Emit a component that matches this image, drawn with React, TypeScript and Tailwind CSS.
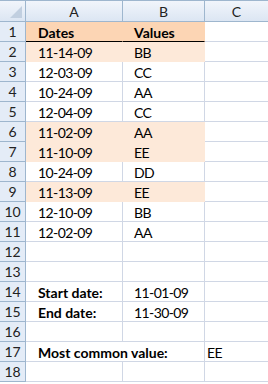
import React from 'react';

type Row = {
    a?: string;
    b?: string;
    c?: string;
    bold?: boolean;
    fill?: 'head' | 'soft';
    span?: boolean;
};

const rows: Row[] = [
    { a: 'Dates', b: 'Values', bold: true, fill: 'head' },
    { a: '11-14-09', b: 'BB', fill: 'soft' },
    { a: '12-03-09', b: 'CC' },
    { a: '10-24-09', b: 'AA' },
    { a: '12-04-09', b: 'CC' },
    { a: '11-02-09', b: 'AA', fill: 'soft' },
    { a: '11-10-09', b: 'EE', fill: 'soft' },
    { a: '10-24-09', b: 'DD' },
    { a: '11-13-09', b: 'EE', fill: 'soft' },
    { a: '12-10-09', b: 'BB' },
    { a: '12-02-09', b: 'AA' },
    {},
    {},
    { a: 'Start date:', b: '11-01-09', bold: true },
    { a: 'End date:', b: '11-30-09', bold: true },
    {},
    { a: 'Most common value:', c: 'EE', bold: true, span: true },
    {},
];

function cellClass(fill?: 'head' | 'soft') {
    if (fill === 'head') return 'bg-[#fcd5b4] border-r-[#fcd5b4] border-b-black';
    if (fill === 'soft') return 'bg-[#fde9d9] border-[#fde9d9]';
    return 'border-[#d0d7e5]';
}

export default function App() {
    return (
        <div
            className="w-[268px] h-[384px] overflow-hidden bg-white text-[14px] leading-[16px] text-black"
            style={{ fontFamily: 'Lato, "Open Sans", sans-serif' }}
        >
            {/* Column headers */}
            <div className="flex h-[22px] border-t border-b border-[#9eb6ce] bg-gradient-to-b from-[#f1f5fb] to-[#dce6f3] text-[#222]">
                <div className="relative w-[26px] shrink-0 border-r border-[#9eb6ce]">
                    <div className="absolute right-[3px] bottom-[3px] w-0 h-0 border-l-[12px] border-l-transparent border-b-[12px] border-b-[#c1cfe0]" />
                </div>
                <div className="w-[97px] shrink-0 border-r border-[#9eb6ce] flex items-center justify-center pt-[2px]">A</div>
                <div className="w-[82px] shrink-0 border-r border-[#9eb6ce] flex items-center justify-center pt-[2px]">B</div>
                <div className="flex-1 flex items-center justify-center pt-[2px]">C</div>
            </div>

            {rows.map((row, i) => (
                <div key={i} className="flex h-[20px]">
                    <div className="w-[26px] shrink-0 border-r border-b border-[#9eb6ce] bg-[#e4ecf7] flex items-center justify-center pt-[1px] text-[#222]">
                        {i + 1}
                    </div>
                    {row.span ? (
                        <div className="w-[179px] shrink-0 border-r border-b border-[#d0d7e5] flex items-center pl-[12px] pt-[2px] font-bold">
                            {row.a}
                        </div>
                    ) : (
                        <>
                            <div
                                className={`w-[97px] shrink-0 border-r border-b flex items-center pl-[12px] pt-[2px] ${cellClass(row.fill)} ${row.bold ? 'font-bold' : 'tracking-[-0.6px]'}`}
                            >
                                {row.a}
                            </div>
                            <div
                                className={`w-[82px] shrink-0 border-r border-b flex items-center pl-[11px] pt-[2px] ${cellClass(row.fill)} ${i === 0 ? 'font-bold' : 'tracking-[-0.6px]'}`}
                            >
                                {row.b}
                            </div>
                        </>
                    )}
                    <div className="flex-1 border-b border-[#d0d7e5] flex items-center pl-[2px] pt-[2px] tracking-[-0.6px]">{row.c}</div>
                </div>
            ))}
        </div>
    );
}
